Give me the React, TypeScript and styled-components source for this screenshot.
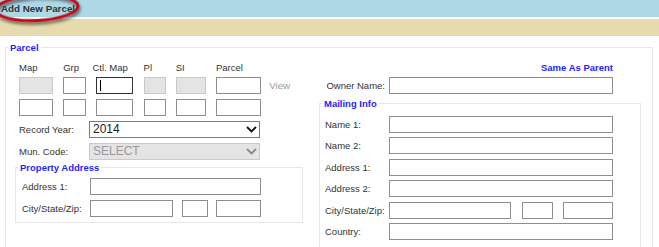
import { Fragment } from 'react'
import styled, { createGlobalStyle, css } from 'styled-components'

const GlobalStyle = createGlobalStyle`
  html, body { margin: 0; padding: 0; background: #fff; }
  body {
    font-family: 'Liberation Sans', Arial, sans-serif;
    font-size: 9.5px;
    color: #333;
  }
  * { box-sizing: border-box; }
`

const Page = styled.div`
  width: 659px;
`

const TitleBar = styled.div`
  position: relative;
  display: flex;
  align-items: center;
  height: 17px;
  padding-left: 1px;
  background: #add8e6;
  font-size: 9.8px;
  font-weight: bold;
  color: #333;
`

const Highlight = styled.svg`
  position: absolute;
  left: 0;
  top: 0;
  overflow: visible;
  pointer-events: none;
`

const Toolbar = styled.div`
  height: 17px;
  margin-top: 2px;
  background: #e6dbae;
`

const Frame = styled.fieldset<{ $outer?: boolean; $gap?: number }>`
  min-width: 0;
  margin: ${p => (p.$outer ? '6px 6px 0 5px' : `${p.$gap ?? 0}px 0 0 0`)};
  padding: 0;
  border: 1px solid #e6e6e6;
`

const Legend = styled.legend`
  margin-left: 2px;
  padding: 0 2px;
  font-size: 9.5px;
  line-height: 11px;
  font-weight: bold;
  color: #1f1fff;
`

const ParcelBody = styled.div`
  display: flex;
  gap: 16px;
  padding: 8px 11px 24px 9px;
`

const LeftCol = styled.div`
  width: 288px;
  display: flex;
  flex-direction: column;
`

const RightCol = styled.div`
  width: 322px;
  display: flex;
  flex-direction: column;
`

const parcelCols = css`
  display: grid;
  grid-template-columns: 34px 23px 37px 22px 30px 45px auto;
  column-gap: 10.2px;
  margin-left: 4px;
`

const ParcelHead = styled.div`
  ${parcelCols};
  height: 13px;
  line-height: 13px;
  margin-bottom: 3px;
`

const HeadLabel = styled.span<{ $wide?: boolean }>`
  white-space: nowrap;
  margin-left: ${p => (p.$wide ? '-4px' : '0')};
`

const ParcelGrid = styled.div`
  ${parcelCols};
  grid-auto-rows: 17px;
  row-gap: 5px;
`

const Box = styled.input`
  display: block;
  width: 100%;
  height: 17px;
  margin: 0;
  padding: 0 3px;
  border: 1px solid #8e8e8e;
  border-radius: 0;
  background: #fff;
  font-family: 'Liberation Sans', Arial, sans-serif;
  font-size: 12px;
  color: #222;
  outline: none;

  &:disabled {
    background: #e4e4e4;
    border-color: #c9c9c9;
  }
`

const FocusWrap = styled.div`
  position: relative;

  ${Box} {
    border-color: #333;
  }

  &::after {
    content: '';
    position: absolute;
    left: 4px;
    top: 3px;
    width: 1px;
    height: 11px;
    background: #000;
  }
`

const ViewLink = styled.span`
  align-self: center;
  margin-left: -2px;
  font-size: 9.8px;
  color: #9a9a9a;
`

const FieldRow = styled.div`
  display: grid;
  grid-template-columns: 70px 171px;
  align-items: center;
  height: 17px;
  margin: 5px 0 0 4px;
`

const Label = styled.label<{ $right?: boolean }>`
  white-space: nowrap;
  text-align: ${p => (p.$right ? 'right' : 'left')};
  padding-right: ${p => (p.$right ? '4px' : '0')};
`

const SelectWrap = styled.div`
  position: relative;
  height: 17px;
`

const Select = styled.select`
  appearance: none;
  display: block;
  width: 100%;
  height: 17px;
  margin: 0;
  padding: 0 0 0 3px;
  border: 1px solid #7a7a7a;
  border-radius: 0;
  background: #fff;
  font-family: 'Liberation Sans', Arial, sans-serif;
  font-size: 12px;
  line-height: 15px;
  color: #222;
  outline: none;

  &:disabled {
    background: #e4e4e4;
    border-color: #cacaca;
    color: #9a9a9a;
    opacity: 1;
  }
`

const Chevron = styled.svg`
  position: absolute;
  right: 3px;
  top: 5px;
  pointer-events: none;
`

const InnerBody = styled.div<{ $pad: string; $cols: string; $gap: number }>`
  display: grid;
  grid-template-columns: ${p => p.$cols};
  grid-auto-rows: 17px;
  row-gap: ${p => p.$gap}px;
  align-items: center;
  padding: ${p => p.$pad};
`

const Triple = styled.div<{ $cols: string; $gap: string }>`
  display: grid;
  grid-template-columns: ${p => p.$cols};
  column-gap: ${p => p.$gap};
`

const SameAs = styled.div`
  height: 13px;
  line-height: 13px;
  padding-right: 28px;
  text-align: right;
  font-weight: bold;
  color: #1f1fff;
`

const OwnerRow = styled.div`
  display: grid;
  grid-template-columns: 70px 224px;
  align-items: center;
  height: 17px;
  margin-top: 3px;
`

const Down = ({ color }: { color: string }) => (
  <Chevron width="11" height="7" viewBox="0 0 11 7">
    <polyline points="1,1 5.5,5.5 10,1" fill="none" stroke={color} strokeWidth="1.8" />
  </Chevron>
)

const mailing = ['Name 1:', 'Name 2:', 'Address 1:', 'Address 2:']

export default function App() {
  return (
    <Page>
      <GlobalStyle />
      <TitleBar>
        Add New Parcel
        <Highlight width="90" height="30">
          <defs>
            <filter id="shade" x="-20%" y="-40%" width="140%" height="200%">
              <feDropShadow dx="1" dy="2.5" stdDeviation="1.5" floodColor="#000" floodOpacity="0.6" />
            </filter>
          </defs>
          <ellipse
            cx="37"
            cy="8"
            rx="41"
            ry="12.5"
            transform="rotate(-3 37 8)"
            fill="none"
            stroke="#bf0f19"
            strokeWidth="3"
            filter="url(#shade)"
          />
        </Highlight>
      </TitleBar>
      <Toolbar />

      <Frame $outer>
        <Legend>Parcel</Legend>
        <ParcelBody>
          <LeftCol>
            <ParcelHead>
              <HeadLabel>Map</HeadLabel>
              <HeadLabel>Grp</HeadLabel>
              <HeadLabel $wide>Ctl. Map</HeadLabel>
              <HeadLabel>Pl</HeadLabel>
              <HeadLabel>SI</HeadLabel>
              <HeadLabel>Parcel</HeadLabel>
            </ParcelHead>
            <ParcelGrid>
              <Box disabled />
              <Box />
              <FocusWrap>
                <Box />
              </FocusWrap>
              <Box disabled />
              <Box disabled />
              <Box />
              <ViewLink>View</ViewLink>
              <Box />
              <Box />
              <Box />
              <Box />
              <Box />
              <Box />
            </ParcelGrid>

            <FieldRow>
              <Label>Record Year:</Label>
              <SelectWrap>
                <Select defaultValue="2014">
                  <option>2014</option>
                </Select>
                <Down color="#111" />
              </SelectWrap>
            </FieldRow>
            <FieldRow>
              <Label>Mun. Code:</Label>
              <SelectWrap>
                <Select disabled defaultValue="SELECT">
                  <option>SELECT</option>
                </Select>
                <Down color="#888" />
              </SelectWrap>
            </FieldRow>

            <Frame $gap={2}>
              <Legend>Property Address</Legend>
              <InnerBody $pad="5px 4px 5px 6px" $cols="68px 171px" $gap={5}>
                <Label>Address 1:</Label>
                <Box />
                <Label>City/State/Zip:</Label>
                <Triple $cols="83px 26px 45px" $gap="8.5px">
                  <Box />
                  <Box />
                  <Box />
                </Triple>
              </InnerBody>
            </Frame>
          </LeftCol>

          <RightCol>
            <SameAs>Same As Parent</SameAs>
            <OwnerRow>
              <Label $right>Owner Name:</Label>
              <Box />
            </OwnerRow>
            <Frame $gap={4}>
              <Legend>Mailing Info</Legend>
              <InnerBody $pad="7px 27px 10px 5px" $cols="64px 224px" $gap={4.4}>
                {mailing.map(m => (
                  <Fragment key={m}>
                    <Label>{m}</Label>
                    <Box />
                  </Fragment>
                ))}
                <Label>City/State/Zip:</Label>
                <Triple $cols="122px 31px 50px" $gap="10.5px">
                  <Box />
                  <Box />
                  <Box />
                </Triple>
                <Label>Country:</Label>
                <Box />
              </InnerBody>
            </Frame>
          </RightCol>
        </ParcelBody>
      </Frame>
    </Page>
  )
}
